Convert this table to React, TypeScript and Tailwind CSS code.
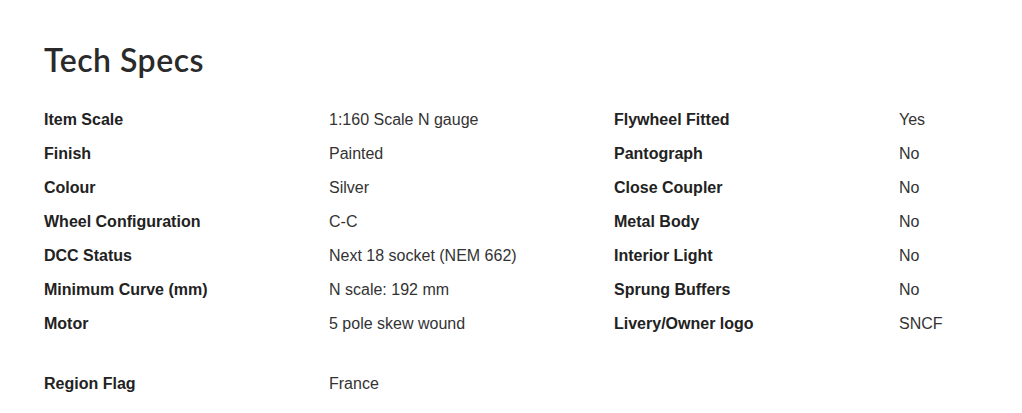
const leftSpecs = [
  ["Item Scale", "1:160 Scale N gauge"],
  ["Finish", "Painted"],
  ["Colour", "Silver"],
  ["Wheel Configuration", "C-C"],
  ["DCC Status", "Next 18 socket (NEM 662)"],
  ["Minimum Curve (mm)", "N scale: 192 mm"],
  ["Motor", "5 pole skew wound"],
];

const rightSpecs = [
  ["Flywheel Fitted", "Yes"],
  ["Pantograph", "No"],
  ["Close Coupler", "No"],
  ["Metal Body", "No"],
  ["Interior Light", "No"],
  ["Sprung Buffers", "No"],
  ["Livery/Owner logo", "SNCF"],
];

function SpecRow({ label, value }: { label: string; value: string }) {
  return (
    <div className="flex h-[34px] items-center">
      <div className="w-[285px] shrink-0 font-bold text-[#222222]">{label}</div>
      <div className="w-[285px] shrink-0 text-[#333333]">{value}</div>
    </div>
  );
}

export default function App() {
  return (
    <div className="min-h-[413px] w-full overflow-hidden bg-white pl-[44px] pt-[40px] font-['Liberation_Sans',Arial,sans-serif] text-base">
      <h1 className="font-['Lato',sans-serif] text-[32px] font-semibold leading-[40px] tracking-[0.5px] text-[#2a2a2a]">
        Tech Specs
      </h1>

      <div className="mt-[23px] flex">
        <div>
          {leftSpecs.map(([label, value]) => (
            <SpecRow key={label} label={label} value={value} />
          ))}
        </div>
        <div>
          {rightSpecs.map(([label, value]) => (
            <SpecRow key={label} label={label} value={value} />
          ))}
        </div>
      </div>

      <div className="mt-[26px]">
        <SpecRow label="Region Flag" value="France" />
      </div>
    </div>
  );
}
